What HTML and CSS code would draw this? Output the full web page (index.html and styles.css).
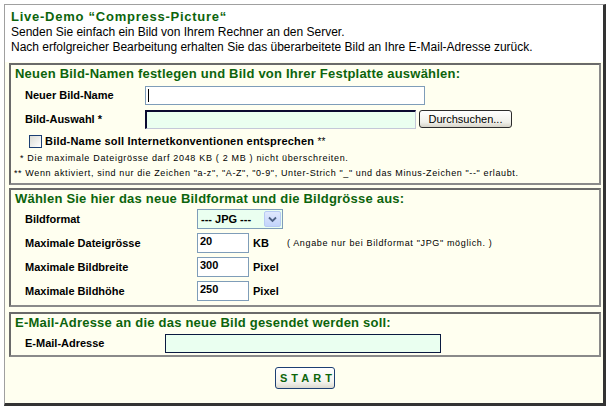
FILE: index.html
```html
<!DOCTYPE html>
<html lang="de">
<head>
<meta charset="utf-8">
<title>Live-Demo Compress-Picture</title>
<link rel="stylesheet" href="styles.css">
</head>
<body>
<div class="frame">
  <div class="intro">
    <h1 class="title">Live-Demo “Compress-Picture“</h1>
    <p class="lead">Senden Sie einfach ein Bild von Ihrem Rechner an den Server.</p>
    <p class="lead">Nach erfolgreicher Bearbeitung erhalten Sie das überarbeitete Bild an Ihre E-Mail-Adresse zurück.</p>
  </div>

  <div class="box box-upload">
    <h2 class="box-title">Neuen Bild-Namen festlegen und Bild von Ihrer Festplatte auswählen:</h2>
    <div class="row row-upload">
      <span class="label label-upload">Neuer Bild-Name</span>
      <div class="field field-name"><span class="caret"></span></div>
    </div>
    <div class="row row-upload">
      <span class="label label-upload">Bild-Auswahl *</span>
      <div class="field field-file"></div>
      <div class="browse">Durchsuchen...</div>
    </div>
    <div class="row-check">
      <span class="checkbox"></span>
      <span class="label">Bild-Name soll Internetkonventionen entsprechen <span class="stars">**</span></span>
    </div>
    <p class="note note-1">* Die maximale Dateigrösse darf 2048 KB ( 2 MB ) nicht überschreiten.</p>
    <p class="note note-2">** Wenn aktiviert, sind nur die Zeichen "a-z", "A-Z", "0-9", Unter-Strich "_" und das Minus-Zeichen "--" erlaubt.</p>
  </div>

  <div class="box box-format">
    <h2 class="box-title">Wählen Sie hier das neue Bildformat und die Bildgrösse aus:</h2>
    <div class="row row-format">
      <span class="label label-format">Bildformat</span>
      <div class="select">
        <span class="select-text">--- JPG ---</span>
        <span class="select-arrow"><svg width="9" height="7" viewBox="0 0 9 7"><path d="M1 1.5 L4.5 5 L8 1.5" fill="none" stroke="#4d6185" stroke-width="1.8"/></svg></span>
      </div>
    </div>
    <div class="row row-format">
      <span class="label label-format">Maximale Dateigrösse</span>
      <div class="field field-num">20</div>
      <span class="unit">KB</span>
      <span class="hint">( Angabe nur bei Bildformat "JPG" möglich. )</span>
    </div>
    <div class="row row-format">
      <span class="label label-format">Maximale Bildbreite</span>
      <div class="field field-num">300</div>
      <span class="unit">Pixel</span>
    </div>
    <div class="row row-format">
      <span class="label label-format">Maximale Bildhöhe</span>
      <div class="field field-num">250</div>
      <span class="unit">Pixel</span>
    </div>
  </div>

  <div class="box box-mail">
    <h2 class="box-title">E-Mail-Adresse an die das neue Bild gesendet werden soll:</h2>
    <div class="row row-mail">
      <span class="label label-mail">E-Mail-Adresse</span>
      <div class="field field-mail"></div>
    </div>
  </div>

  <div class="actions">
    <div class="start">START</div>
  </div>
</div>
</body>
</html>
```

FILE: styles.css
```css
* { box-sizing: border-box; }

body {
  margin: 0;
  background: #ffffff;
  font-family: "Liberation Sans", Arial, sans-serif;
  color: #000;
}

.frame {
  margin: 4px 0 0 4px;
  width: 602px;
  height: 402px;
  border-left: 1px solid #a0a0a0;
  border-top: 1px solid #a0a0a0;
  border-right: 3px solid #333333;
  border-bottom: 3px solid #333333;
  background: #fffff0;
}

.intro {
  background: #ffffff;
  height: 57px;
  padding: 4px 0 0 6px;
}

.title {
  margin: 0;
  font-size: 13px;
  line-height: 16px;
  font-weight: bold;
  letter-spacing: 0.75px;
  color: #0c640c;
}

.lead {
  margin: 0;
  font-size: 12px;
  line-height: 15px;
}

.box {
  margin: 1px 2px 0 4px;
  border: 2px solid #707070;
  border-color: #6a6a6a #8a8a8a #8a8a8a #6a6a6a;
}

.box-format { margin-top: 3px; padding-bottom: 2px; }
.box-mail { margin-top: 5px; padding-bottom: 1px; }
.box-upload { padding-bottom: 2px; }

.box-title {
  margin: 0;
  padding-left: 4px;
  font-size: 13px;
  line-height: 18px;
  font-weight: bold;
  letter-spacing: 0.22px;
  color: #0c640c;
}

.box-format .box-title { line-height: 17px; }

.row {
  display: flex;
  align-items: center;
  padding-left: 14px;
}

.row-upload, .row-format { height: 24px; }
.row-mail { height: 22px; }

.label {
  font-size: 11px;
  font-weight: bold;
  flex: none;
}

.label-upload { width: 120px; }
.label-format { width: 172px; }
.label-mail { width: 140px; }

.field {
  height: 19px;
  flex: none;
  font-size: 11px;
  font-weight: bold;
  line-height: 17px;
}

.field-name {
  width: 280px;
  border: 1px solid #7f9db9;
  background: #fff;
  position: relative;
}

.caret {
  position: absolute;
  left: 2px;
  top: 2px;
  width: 1px;
  height: 13px;
  background: #000;
}

.field-file {
  width: 271px;
  background: #eafff0;
  border-top: 2px solid #0a0a30;
  border-left: 2px solid #0a0a30;
  border-right: 1px solid #c4c8d8;
  border-bottom: 1px solid #c4c8d8;
}

.browse {
  margin-left: 3px;
  width: 93px;
  height: 18px;
  border: 1px solid #2c2c2c;
  border-radius: 3px;
  background: linear-gradient(#ffffff, #f0f0ea 70%, #d6d3c8);
  font-size: 11px;
  line-height: 16px;
  text-align: center;
}

.row-check {
  display: flex;
  align-items: center;
  height: 20px;
  padding-left: 18px;
  gap: 3px;
}

.checkbox {
  width: 13px;
  height: 13px;
  border: 1px solid #1c3f73;
  background: linear-gradient(135deg, #dcdcd5, #ffffff);
}

.row-check .label { letter-spacing: 0.2px; }

.stars { font-weight: normal; font-size: 10px; }

.note {
  margin: 0;
  font-size: 9px;
  line-height: 15px;
  letter-spacing: 0.68px;
}

.note-1 { padding-left: 9px; }
.note-2 { padding-left: 3px; letter-spacing: 0.62px; }

.select {
  width: 86px;
  height: 20px;
  border: 1px solid #7f9db9;
  background: #eafff0;
  display: flex;
  align-items: center;
  justify-content: space-between;
  padding: 0 1px 0 3px;
}

.select-text {
  font-size: 11px;
  font-weight: bold;
}

.select-arrow {
  width: 17px;
  height: 16px;
  border: 1px solid #b8cbf4;
  border-radius: 2px;
  background: linear-gradient(#dfe8fd, #c3d4fb);
  display: flex;
  align-items: center;
  justify-content: center;
}

.field-num {
  width: 52px;
  height: 20px;
  border: 1px solid #7f9db9;
  background: #fff;
  padding-left: 2px;
  line-height: 14px;
}

.unit {
  margin-left: 4px;
  font-size: 11px;
  font-weight: bold;
}

.hint {
  margin-left: 18px;
  font-size: 9px;
  letter-spacing: 0.65px;
}

.field-mail {
  width: 276px;
  background: #eafff0;
  border: 1px solid #0a1a40;
}

.actions {
  display: flex;
  justify-content: center;
  margin: 10px 0 0 4px;
  width: 592px;
}

.start {
  width: 60px;
  height: 22px;
  border: 1px solid #1c3f73;
  border-radius: 3px;
  background: linear-gradient(#ffffff, #f3f3ee 70%, #dcd9cf);
  color: #0c640c;
  font-size: 11px;
  font-weight: bold;
  letter-spacing: 4px;
  line-height: 20px;
  text-align: center;
  padding-left: 4px;
}
```
